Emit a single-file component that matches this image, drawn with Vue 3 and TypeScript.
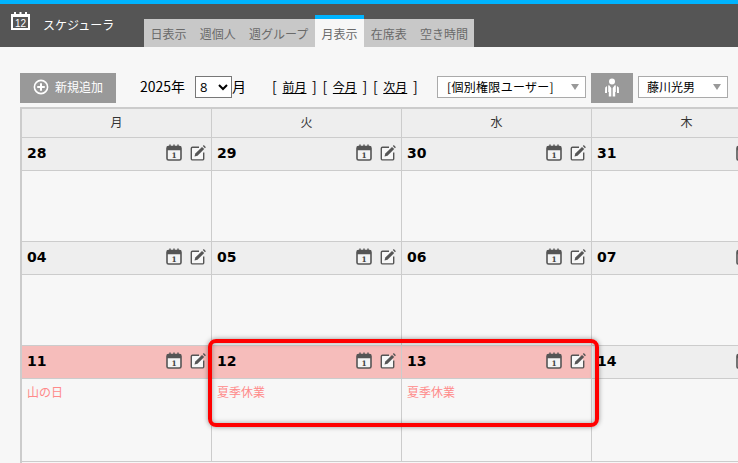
<script setup lang="ts">
interface Day { n: string; kind?: 'holiday'; event?: string }
const tabs = ['日表示', '週個人', '週グループ', '月表示', '在席表', '空き時間']
const weekdays = ['月', '火', '水', '木']
const weeks: Day[][] = [
  [{ n: '28' }, { n: '29' }, { n: '30' }, { n: '31' }],
  [{ n: '04' }, { n: '05' }, { n: '06' }, { n: '07' }],
  [
    { n: '11', kind: 'holiday', event: '山の日' },
    { n: '12', kind: 'holiday', event: '夏季休業' },
    { n: '13', kind: 'holiday', event: '夏季休業' },
    { n: '14' },
  ],
]
</script>

<template>
  <div class="page">
    <header class="topbar">
      <div class="brand">
        <svg class="brand-icon" width="22" height="20" viewBox="0 0 22 20">
          <rect x="1" y="3" width="19" height="16" fill="#fff" />
          <rect x="3" y="6" width="15" height="11" fill="#555" />
          <rect x="4" y="1" width="2" height="3" fill="#fff" />
          <rect x="9.5" y="1" width="2" height="3" fill="#fff" />
          <rect x="15" y="1" width="2" height="3" fill="#fff" />
          <text x="10.500" y="15.500" text-anchor="middle" class="brand-num">12</text>
        </svg>
        <span class="brand-name">スケジューラ</span>
      </div>
      <nav class="tabs">
        <span v-for="t in tabs" :key="t" class="tab" :class="{ active: t === '月表示' }">{{ t }}</span>
      </nav>
    </header>

    <div class="toolbar">
      <button class="add-btn" type="button">
        <svg width="16" height="16" viewBox="0 0 16 16">
          <circle cx="8" cy="8" r="6.600" fill="none" stroke="#fff" stroke-width="1.600" />
          <path d="M8 4.200v7.600M4.200 8h7.600" stroke="#fff" stroke-width="2" />
        </svg>
        <span>新規追加</span>
      </button>
      <span class="year">2025年</span>
      <select class="month-select"><option>8</option></select>
      <span class="month-label">月</span>
      <span class="pager">[ <a>前月</a> ] [ <a>今月</a> ] [ <a>次月</a> ]</span>
      <div class="fake-select perm">[個別権限ユーザー]<i class="caret"></i></div>
      <button class="people-btn" type="button">
        <svg width="16" height="20" viewBox="0 0 16 20">
          <circle cx="8" cy="3.600" r="3" fill="#fff" />
          <path d="M4.800 6.800 7.300 10v8.500H4.800V14H4.200V8.300z" fill="#fff" />
          <path d="M11.200 6.800 8.700 10v8.500h2.500V14h.6V8.300z" fill="#fff" />
          <path d="M3 8 1.200 9.600 1 15h2z" fill="#fff" />
          <path d="M13 8l1.800 1.600.2 5.400h-2z" fill="#fff" />
        </svg>
      </button>
      <div class="fake-select user">藤川光男<i class="caret"></i></div>
    </div>

    <div class="calendar">
      <div class="weekdays">
        <div v-for="d in weekdays" :key="d" class="weekday">{{ d }}</div>
      </div>
      <div v-for="(week, i) in weeks" :key="i" class="week">
        <div v-for="day in week" :key="day.n" class="day" :class="day.kind">
          <div class="day-head">
            <span class="day-num">{{ day.n }}</span>
            <span class="day-icons">
              <svg width="16" height="17" viewBox="0 0 16 17">
                <rect x="1" y="2.600" width="14" height="13.400" rx="1.600" fill="#f4f4f4" stroke="#555" stroke-width="1.600" />
                <path d="M1 3.500a1 1 0 0 1 1-1h12a1 1 0 0 1 1 1v2.700H1z" fill="#555" />
                <path d="M4 .6v3M8 .6v3M12 .6v3" stroke="#555" stroke-width="1.400" />
                <text x="8" y="14" text-anchor="middle" class="cal-num">1</text>
              </svg>
              <svg width="16" height="17" viewBox="0 0 16 17">
                <path d="M9 3.300H2.500A1.200 1.200 0 0 0 1.300 4.500v10.200a1.200 1.200 0 0 0 1.200 1.200h10a1.200 1.200 0 0 0 1.200-1.200V8.500" fill="#f7f7f7" stroke="#555" stroke-width="1.400" />
                <path d="M4.500 12.600l.8-3 6.700-6.700 2.200 2.200-6.700 6.700z" fill="#555" />
                <path d="M12.800 2.100l1-1 2.100 2.100-1 1z" fill="#555" />
              </svg>
            </span>
          </div>
          <div class="day-body">
            <span v-if="day.event" class="event">{{ day.event }}</span>
          </div>
        </div>
      </div>
    </div>

    <div class="highlight"></div>
  </div>
</template>

<style scoped>
.page {
  position: relative;
  width: 738px;
  height: 463px;
  overflow: hidden;
  background: #f7f7f7;
  font-family: "Noto Sans CJK JP", "Open Sans", sans-serif;
  color: #000;
}
.topbar {
  display: flex;
  justify-content: flex-start;
  align-items: flex-end;
  height: 43px;
  background: #555;
  border-top: 4px solid #00b4ff;
}
.brand {
  display: flex;
  align-items: flex-start;
  width: 144px;
  height: 43px;
  box-sizing: border-box;
  padding: 7px 0 0 10px;
  color: #fff;
}
.brand-icon { display: block; }
.brand-num {
  font-family: "Liberation Sans", sans-serif;
  font-size: 10px;
  fill: #fff;
}
.brand-name {
  margin-left: 11px;
  margin-top: 5px;
  font-size: 12px;
  line-height: 18px;
}
.tabs { display: flex; align-items: flex-end; }
.tab {
  height: 28px;
  padding: 0 6.600px;
  box-sizing: border-box;
  background: #c8c8c8;
  color: #6a6a6a;
  font-size: 12px;
  line-height: 30px;
}
.tab.active {
  height: 32px;
  background: #f7f7f7;
  border-top: 4px solid #00b4ff;
}
.toolbar {
  display: flex;
  align-items: center;
  height: 30px;
  margin-top: 26px;
  padding-left: 20px;
}
.add-btn {
  display: flex;
  align-items: center;
  gap: 6px;
  width: 96px;
  height: 30px;
  padding: 0 0 3px 13px;
  border: 0;
  background: #999;
  color: #fff;
  font: 12px "Noto Sans CJK JP", sans-serif;
}
.year {
  margin-left: 24px;
  margin-bottom: 4px;
  font-size: 14px;
  line-height: 20px;
}
.month-select {
  width: 37px;
  height: 22px;
  margin-left: 10px;
  margin-bottom: 2px;
  padding: 0;
  border: 1px solid #777;
  border-radius: 0;
  background: #fff;
  font: 13px "Open Sans", sans-serif;
}
.month-label { font-size: 14px; margin-bottom: 4px; }
.pager {
  margin-left: 26px;
  margin-bottom: 4px;
  width: 165px;
  font-size: 14px;
  word-spacing: 2.500px;
  white-space: nowrap;
}
.pager a { font-size: 12px; text-decoration: underline; }
.fake-select {
  position: relative;
  box-sizing: border-box;
  height: 22px;
  margin-bottom: 2px;
  padding-left: 9px;
  border: 1px solid #aaa;
  background: #fff;
  font-size: 12px;
  line-height: 20px;
}
.perm { width: 149px; letter-spacing: 0.300px; }
.user { width: 90px; margin-left: 5px; padding-left: 8px; }
.caret {
  position: absolute;
  right: 6px;
  top: 7px;
  border: 4px solid transparent;
  border-top: 6px solid #999;
  border-bottom: 0;
}
.people-btn {
  display: flex;
  align-items: center;
  justify-content: center;
  width: 42px;
  height: 30px;
  margin-left: 5px;
  padding: 0;
  border: 0;
  background: #999;
}
.calendar {
  width: 800px;
  min-height: 400px;
  margin: 4px 0 0 20px;
  border-top: 2px solid #ccc;
  border-left: 2px solid #ccc;
}
.weekdays { display: flex; background: #eee; }
.weekday {
  flex: none;
  width: 190px;
  height: 29px;
  box-sizing: border-box;
  border-right: 1px solid #ccc;
  border-bottom: 1px solid #ccc;
  font-size: 12px;
  line-height: 26px;
  text-align: center;
  color: #333;
}
.week { display: flex; }
.day {
  flex: none;
  width: 190px;
  box-sizing: border-box;
  border-right: 1px solid #ccc;
  border-bottom: 1px solid #ccc;
}
.week:nth-of-type(2) .day { height: 104px; }
.week:nth-of-type(3) .day { height: 104px; }
.week:nth-of-type(4) .day { height: 116px; }
.day-head {
  display: flex;
  justify-content: space-between;
  align-items: center;
  height: 33px;
  box-sizing: border-box;
  padding: 0 5px 4px 5px;
  background: #eee;
  border-bottom: 1px solid #ccc;
}
.day.holiday .day-head { background: #f6bdbb; }
.day-num {
  font-family: "DejaVu Sans", sans-serif;
  font-weight: 700;
  font-size: 14px;
  line-height: 17px;
  margin-top: 2px;
}
.day-icons { display: flex; gap: 8px; }
.day-icons svg { display: block; }
.cal-num {
  font-family: "DejaVu Serif", serif;
  font-size: 7.500px;
  font-weight: 700;
  fill: #444;
}
.day-body {
  padding: 2px 0 0 5px;
  line-height: 18px;
}
.event {
  font-size: 12px;
  color: #ff8a8a;
}
.highlight {
  position: absolute;
  left: 208px;
  top: 339px;
  width: 383px;
  height: 80px;
  border: 4px solid #f00;
  border-radius: 8px;
  box-shadow: 0 0 5px rgba(0, 0, 0, 0.4), inset 0 0 5px rgba(0, 0, 0, 0.35);
}
</style>
